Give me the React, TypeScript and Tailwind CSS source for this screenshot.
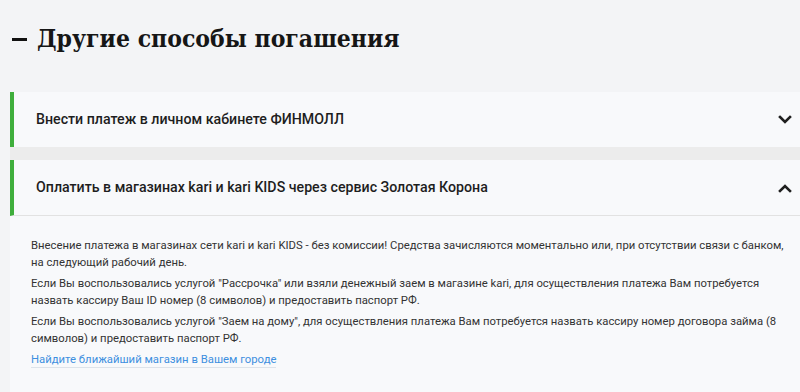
import React from "react";

function Chevron({ up }: { up?: boolean }) {
  return (
    <svg width="14" height="10" viewBox="0 0 14 10" className="shrink-0">
      <path
        d={up ? "M2 8 L7 3 L12 8" : "M2 2 L7 7 L12 2"}
        fill="none"
        stroke="#1f1f1f"
        strokeWidth="2.6"
        strokeLinecap="square"
      />
    </svg>
  );
}

export default function App() {
  const body = { fontFamily: "Roboto, 'Liberation Sans', sans-serif" };
  return (
    <div className="w-[800px] h-[392px] overflow-hidden bg-[#f3f4f6]" style={body}>
      <div className="flex items-center h-[76px] pl-[12px] pt-[2px]">
        <div className="w-[15px] h-[3px] bg-[#111] mr-[10px]" />
        <h2
          className="text-[24.5px] font-bold text-[#161616] [font-stretch:condensed]"
          style={{ fontFamily: "'DejaVu Serif', 'Liberation Serif', serif" }}
        >
          Другие способы погашения
        </h2>
      </div>
      <div className="ml-[10px] mt-[16px] bg-[#ececec] flex flex-col gap-[13px]">
        <div className="flex items-center h-[55px] bg-[#f8f9fb] border-l-4 border-[#3fae3c] pl-[22px] pr-[8px]">
          <span className="flex-1 text-[14.2px] font-medium text-[#1e1e1e]">
            Внести платеж в личном кабинете ФИНМОЛЛ
          </span>
          <Chevron />
        </div>
        <div className="flex flex-col bg-[#f8f9fb]">
          <div className="flex items-center h-[56px] border-l-4 border-[#3fae3c] border-b border-b-[#e2e2e2] pl-[22px] pr-[8px]">
            <span className="flex-1 text-[14.2px] font-medium text-[#1e1e1e]">
              Оплатить в магазинах kari и kari KIDS через сервис Золотая Корона
            </span>
            <Chevron up />
          </div>
          <div className="pl-[21px] pr-[3px] pt-[21px] pb-[40px] text-[11.3px] leading-[17px] text-[#333]">
            <p className="mb-[4px]">
              Внесение платежа в магазинах сети kari и kari KIDS - без комиссии! Средства зачисляются моментально или, при отсутствии связи с банком, на следующий рабочий день.
            </p>
            <p className="mb-[4px]">
              Если Вы воспользовались услугой "Рассрочка" или взяли денежный заем в магазине kari, для осуществления платежа Вам потребуется назвать кассиру Ваш ID номер (8 символов) и предоставить паспорт РФ.
            </p>
            <p className="mb-[4px]">
              Если Вы воспользовались услугой "Заем на дому", для осуществления платежа Вам потребуется назвать кассиру номер договора займа (8 символов) и предоставить паспорт РФ.
            </p>
            <a className="text-[#3d8fe0] border-b border-[#dde3ea] pb-[1px]">
              Найдите ближайший магазин в Вашем городе
            </a>
          </div>
        </div>
      </div>
    </div>
  );
}
